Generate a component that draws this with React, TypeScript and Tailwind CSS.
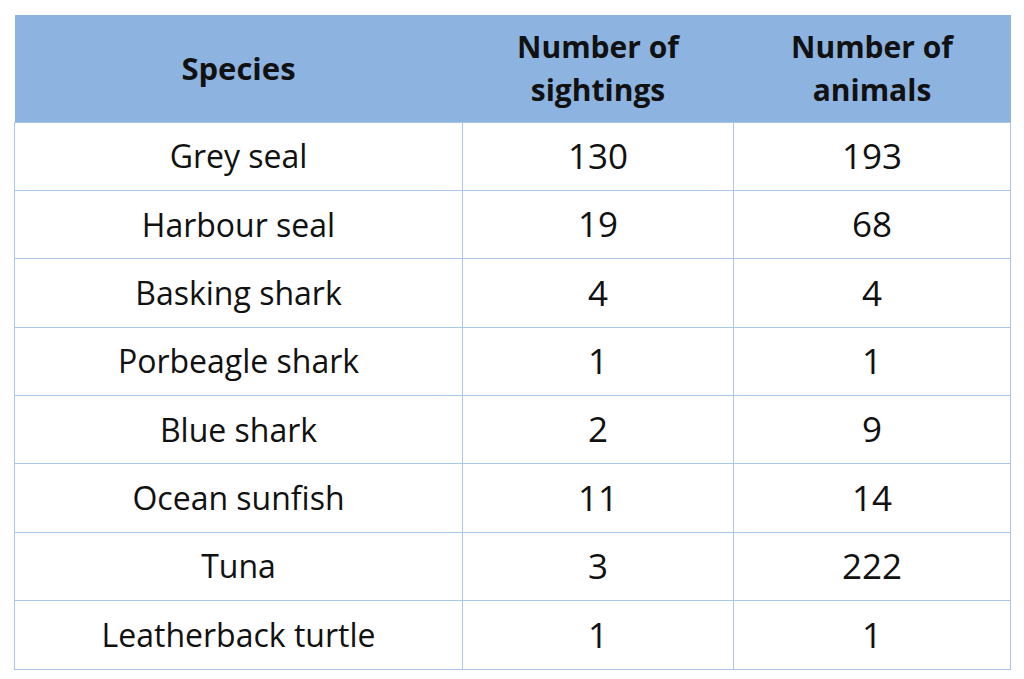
const rows: [string, string, string][] = [
  ["Grey seal", "130", "193"],
  ["Harbour seal", "19", "68"],
  ["Basking shark", "4", "4"],
  ["Porbeagle shark", "1", "1"],
  ["Blue shark", "2", "9"],
  ["Ocean sunfish", "11", "14"],
  ["Tuna", "3", "222"],
  ["Leatherback turtle", "1", "1"],
];

export default function App() {
  return (
    <div className="w-[1024px] h-[679px] bg-white pt-[15px] pl-[14px] font-['Open_Sans',sans-serif] text-[#111]">
      <table className="border-collapse table-fixed w-[996px]">
        <colgroup>
          <col className="w-[448px]" />
          <col className="w-[271px]" />
          <col className="w-[277px]" />
        </colgroup>
        <thead>
          <tr className="h-[107px] bg-[#8db3e0]">
            <th className="text-[31px] font-bold leading-[43px] text-center">Species</th>
            <th className="text-[30px] font-bold leading-[43px] text-center">
              Number of
              <br />
              sightings
            </th>
            <th className="text-[30px] font-bold leading-[43px] text-center">
              Number of
              <br />
              animals
            </th>
          </tr>
        </thead>
        <tbody>
          {rows.map(([name, sightings, animals]) => (
            <tr key={name} className="h-[68.375px]">
              <td className="border border-[#a9c7ec] text-center text-[32px]">{name}</td>
              <td className="border border-[#a9c7ec] text-center text-[35px]">{sightings}</td>
              <td className="border border-[#a9c7ec] text-center text-[35px]">{animals}</td>
            </tr>
          ))}
        </tbody>
      </table>
    </div>
  );
}
